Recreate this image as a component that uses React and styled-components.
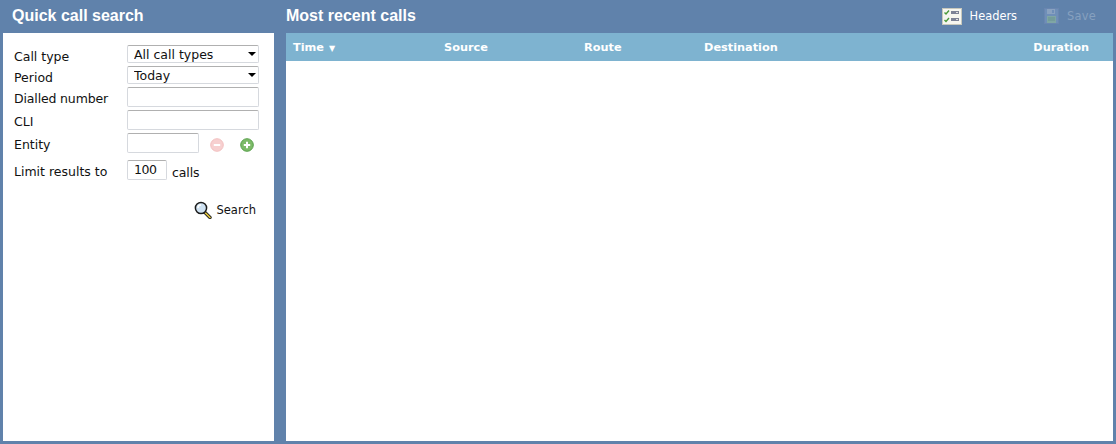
import React from "react";
import styled, { createGlobalStyle } from "styled-components";

const Global = createGlobalStyle`
  html, body { margin: 0; padding: 0; background: #6082ab; }
  body { font-family: "DejaVu Sans", Verdana, sans-serif; }
`;
const Page = styled.div`
  width: 1116px; height: 444px; box-sizing: border-box; padding: 0 3px 3px;
  display: grid; grid-template-columns: 271px 827px; column-gap: 12px;
  grid-template-rows: 33px 1fr; background: #6082ab; overflow: hidden;
`;
const TitleBar = styled.div`
  display: flex; align-items: center; justify-content: space-between;
  padding-left: ${p => p.$inset}px; padding-bottom: 1px;
`;
const Title = styled.h1`
  margin: 0; font: bold 16px "Liberation Sans", Arial, sans-serif; color: #fff;
`;
const Actions = styled.div`display: flex; align-items: center; margin-right: 17px;`;
const Action = styled.div`
  display: flex; align-items: center; gap: 8px; margin-left: ${p => p.$gap}px;
  font-size: 11.4px; color: ${p => p.$off ? "#86a0bf" : "#fff"};
  letter-spacing: ${p => p.$off ? 0.25 : 0}px;
`;
const Panel = styled.div`background: #fff; box-sizing: border-box; min-height: 0;`;
const Form = styled(Panel)`padding: 12px 15px 0 11px;`;
const Row = styled.div`
  display: grid; grid-template-columns: 113px auto; align-items: center;
  margin-top: ${p => p.$top}px; height: ${p => p.$h}px;
`;
const Label = styled.label`
  font-size: 12.5px; color: #111; position: relative; top: ${p => p.$dy || 0}px;
  letter-spacing: ${p => p.$track || 0}px;
`;
const SelectWrap = styled.div`
  position: relative; width: 132px; height: 18px;
  &::after {
    content: ""; position: absolute; right: 3px; top: 7px;
    border-left: 4px solid transparent; border-right: 4px solid transparent;
    border-top: 4px solid #000;
  }
`;
const Select = styled.select`
  appearance: none; width: 100%; height: 100%; box-sizing: border-box; display: block;
  border: 1px solid #d6d9de; border-top-color: #b0b0b0; border-radius: 2px; background: #fff;
  padding: 0 0 0 6px; margin: 0; font: 12.5px "DejaVu Sans", Verdana, sans-serif; color: #111;
`;
const Input = styled.input`
  box-sizing: border-box; display: block; width: ${p => p.$w}px; height: 20px; margin: 0;
  border: 1px solid #d6d9de; border-top-color: #b0b0b0; border-radius: 2px; background: #fff;
  padding: 0 0 1px 6px; font: 12.5px "DejaVu Sans", Verdana, sans-serif; color: #111; outline: none;
  letter-spacing: ${p => p.$track || 0}px;
`;
const Inline = styled.div`display: flex; align-items: center;`;
const Unit = styled.span`font-size: 12.5px; color: #111; margin-left: 5px; position: relative; top: 2px; letter-spacing: -0.1px;`;
const IconBtn = styled.span`display: flex; margin-left: ${p => p.$gap}px; position: relative; top: 2px;`;
const SearchRow = styled.div`
  display: flex; justify-content: flex-end; align-items: center; gap: 4px;
  margin-top: 21px; padding-right: 3px; font-size: 11.5px; color: #111;
`;
const Table = styled(Panel)``;
const Head = styled.div`
  height: 28px; background: #7eb3d0; display: grid; padding-left: 7px;
  grid-template-columns: 151px 140px 120px 1fr 80px; align-items: center;
  font-size: 11.3px; font-weight: bold; color: #fff;
`;
const Col = styled.div`text-align: ${p => p.$right ? "right" : "left"}; padding-right: ${p => p.$right ? 24 : 0}px;`;
const Sort = styled.span`font-size: 8px; margin-left: 5px;`;

const HeadersIcon = () => (
  <svg width="20" height="17" viewBox="0 0 20 17">
    <rect x="0.5" y="0.5" width="19" height="16" fill="#f6f6f0" stroke="#c8c8bc" />
    <path d="M2.5 4.5l1.5 1.5 3-3.5M2.5 12l1.5 1.5 3-3.5" fill="none" stroke="#4a9a3a" strokeWidth="1.4" />
    <rect x="9" y="3" width="8" height="3" fill="#7c8296" />
    <rect x="9" y="10" width="8" height="3" fill="#7c8296" />
    <path d="M14 4h2v1h-2zM14 11h2v1h-2z" fill="#e0e0e0" />
  </svg>
);
const SaveIcon = () => (
  <svg width="15" height="16" viewBox="0 0 15 16">
    <rect x="0.5" y="0.5" width="14" height="15" fill="#6f8fb8" stroke="#6a86b0" />
    <rect x="3" y="1" width="8" height="5" fill="#8aa2c0" />
    <rect x="8" y="2" width="2" height="3" fill="#6f8fb8" />
    <rect x="3" y="8" width="9" height="7" fill="#7fa6a4" />
    <path d="M4 10h7M4 12h7" stroke="#6b9290" />
  </svg>
);
const Circle = ({ c, edge, plus }) => (
  <svg width="14" height="14" viewBox="0 0 14 14">
    <circle cx="7" cy="7" r="6.3" fill={c} stroke={edge} />
    <path d={plus ? "M7 3.8v6.4M3.8 7h6.4" : "M3.8 7h6.4"} stroke="#fff" strokeWidth="2" />
  </svg>
);
const Magnifier = () => (
  <svg width="18" height="18" viewBox="0 0 18 18">
    <path d="M10.5 11l5.5 5.5" stroke="#222" strokeWidth="3.4" strokeLinecap="round" />
    <path d="M11.5 12l4.5 4.5" stroke="#e6c93a" strokeWidth="1.6" strokeLinecap="round" />
    <circle cx="7" cy="7" r="5.6" fill="#cfe2f2" stroke="#1c1c1c" strokeWidth="1.5" />
    <path d="M4 7a3 3 0 0 1 3-3" stroke="#fff" strokeWidth="1.4" fill="none" />
  </svg>
);

export default function App() {
  return (
    <Page>
      <Global />
      <TitleBar $inset={9}><Title>Quick call search</Title></TitleBar>
      <TitleBar $inset={0}>
        <Title>Most recent calls</Title>
        <Actions>
          <Action><HeadersIcon />Headers</Action>
          <Action $off $gap={27}><SaveIcon />Save</Action>
        </Actions>
      </TitleBar>
      <Form>
        <Row $h={18}>
          <Label $dy={2}>Call type</Label>
          <SelectWrap><Select defaultValue="all"><option value="all">All call types</option></Select></SelectWrap>
        </Row>
        <Row $h={18} $top={3}>
          <Label $dy={2}>Period</Label>
          <SelectWrap><Select defaultValue="today"><option value="today">Today</option></Select></SelectWrap>
        </Row>
        <Row $h={20} $top={3}>
          <Label $dy={1} $track={-0.15}>Dialled number</Label>
          <Input $w={132} />
        </Row>
        <Row $h={20} $top={3}>
          <Label $dy={1}>CLI</Label>
          <Input $w={132} />
        </Row>
        <Row $h={20} $top={3}>
          <Label $dy={1}>Entity</Label>
          <Inline>
            <Input $w={72} />
            <IconBtn $gap={11}><Circle c="#f7d0d0" edge="#f2c0c0" /></IconBtn>
            <IconBtn $gap={16}><Circle c="#7dbb68" edge="#58a04c" plus /></IconBtn>
          </Inline>
        </Row>
        <Row $h={20} $top={7}>
          <Label $dy={1}>Limit results to</Label>
          <Inline>
            <Input $w={40} $track={-0.4} defaultValue="100" />
            <Unit>calls</Unit>
          </Inline>
        </Row>
        <SearchRow><Magnifier />Search</SearchRow>
      </Form>
      <Table>
        <Head>
          <Col>Time<Sort>▼</Sort></Col>
          <Col>Source</Col>
          <Col>Route</Col>
          <Col>Destination</Col>
          <Col $right>Duration</Col>
        </Head>
      </Table>
    </Page>
  );
}
